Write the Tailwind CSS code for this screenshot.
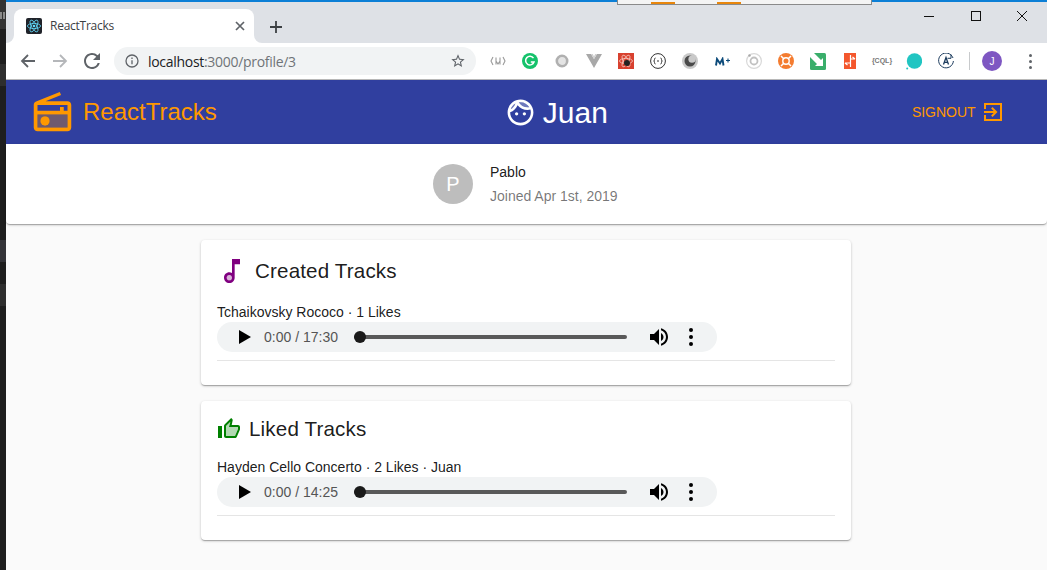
<!DOCTYPE html>
<html lang="en">
<head>
<meta charset="utf-8">
<title>ReactTracks</title>
<script src="https://cdn.jsdelivr.net/npm/@tailwindcss/browser@4"></script>
</head>
<body class="w-[1047px] h-[570px] overflow-hidden relative bg-[#fafafa] font-['Liberation_Sans',Arial,sans-serif] text-[14px] text-black/90">
  <!-- window fragment behind the browser -->
  <div class="absolute z-10 top-0 left-[617px] w-[255px] h-[5px] bg-[#f4f4f4] border-b border-x border-[#8a8a8a] flex items-end">
    <div class="ml-[33px] w-[24px] h-[2px] bg-[#e8860c]"></div>
    <div class="ml-[42px] w-[24px] h-[2px] bg-[#e8860c]"></div>
  </div>
  <div class="flex h-[570px]">
    <!-- strip of the window behind -->
    <div class="w-[6px] shrink-0 flex flex-col bg-[#1e1e1e]">
      <div class="h-[29px] bg-[#333333] flex gap-[1px] pt-[12px] text-[0px]">
        <div class="w-[2px] h-[7px] bg-[#8a8a8a]"></div>
        <div class="w-[2px] h-[7px] bg-[#8a8a8a]"></div>
      </div>
      <div class="h-[35px]"></div>
      <div class="h-[22px] bg-[#2e2e2e]"></div>
      <div class="h-[154px]"></div>
      <div class="h-[22px] bg-[#333338]"></div>
      <div class="h-[22px]"></div>
      <div class="h-[22px] bg-[#2e2e2e]"></div>
    </div>
    <div class="flex-1 min-w-0 flex flex-col">
      <div class="h-[2px] bg-[#0c7fd6]"></div>
      <!-- tab strip -->
      <div class="h-[41px] bg-[#dee1e6] flex items-end pl-[8px] relative">
        <div class="relative w-[240px] h-[34px] bg-white rounded-t-[8px] flex items-center pl-[12px] pr-[9px] pb-[0px]">
          <svg class="absolute left-[-8px] bottom-0" width="8" height="8" viewBox="0 0 8 8"><path d="M8 0v8H0a8 8 0 0 0 8-8z" fill="#fff"/></svg>
          <svg class="absolute right-[-8px] bottom-0" width="8" height="8" viewBox="0 0 8 8"><path d="M0 0v8h8a8 8 0 0 1-8-8z" fill="#fff"/></svg>
          <svg class="shrink-0" width="16" height="16" viewBox="0 0 16 16"><rect width="16" height="16" rx="2" fill="#20232a"/><g fill="none" stroke="#61dafb" stroke-width=".8"><ellipse cx="8" cy="8" rx="6.6" ry="2.6"/><ellipse cx="8" cy="8" rx="6.6" ry="2.6" transform="rotate(60 8 8)"/><ellipse cx="8" cy="8" rx="6.6" ry="2.6" transform="rotate(120 8 8)"/></g><circle cx="8" cy="8" r="1.3" fill="#61dafb"/></svg>
          <span class="ml-[8px] font-['Open_Sans',sans-serif] text-[12px] tracking-[-0.25px] text-[#3c4043]">ReactTracks</span>
          <svg class="ml-auto" width="10" height="10" viewBox="0 0 10 10" fill="none" stroke="#5f6368" stroke-width="1.7"><path d="M1 1l8 8M9 1l-8 8"/></svg>
        </div>
        <svg class="ml-[16px] mb-[10px]" width="12" height="12" viewBox="0 0 12 12" fill="none" stroke="#3c4043" stroke-width="1.8"><path d="M6 0v12M0 6h12"/></svg>
        <div class="ml-auto self-start flex items-center h-[28px] mt-0">
          <svg class="mr-[37px]" width="10" height="10" viewBox="0 0 10 10" stroke="#111" stroke-width="1"><path d="M0 5.5h10"/></svg>
          <svg class="mr-[36px]" width="10" height="10" viewBox="0 0 10 10" fill="none" stroke="#111" stroke-width="1"><rect x=".5" y=".5" width="9" height="9"/></svg>
          <svg class="mr-[20px]" width="10" height="10" viewBox="0 0 10 10" fill="none" stroke="#111" stroke-width="1"><path d="M0 0l10 10M10 0L0 10"/></svg>
        </div>
      </div>
      <!-- toolbar -->
      <div class="h-[37px] bg-white border-b border-[#b8b8b8] flex items-center pl-[6px]">
        <div class="w-[32px] flex justify-center">
          <svg width="16" height="16" viewBox="0 0 16 16" fill="none" stroke="#5f6368" stroke-width="1.8"><path d="M15 8H2M8 2L2 8l6 6"/></svg>
        </div>
        <div class="w-[32px] flex justify-center">
          <svg width="16" height="16" viewBox="0 0 16 16" fill="none" stroke="#b5b7ba" stroke-width="1.8"><path d="M1 8h13M8 2l6 6-6 6"/></svg>
        </div>
        <div class="w-[32px] flex justify-center">
          <svg width="24" height="24" viewBox="0 0 24 24"><path fill="#5f6368" d="M17.65 6.35A7.958 7.958 0 0 0 12 4c-4.42 0-7.99 3.58-7.99 8s3.57 8 7.99 8c3.73 0 6.84-2.55 7.73-6h-2.08A5.99 5.99 0 0 1 12 18c-3.31 0-6-2.69-6-6s2.69-6 6-6c1.66 0 3.14.69 4.22 1.78L13 11h7V4l-2.35 2.35z"/></svg>
        </div>
        <div class="ml-[6px] w-[362px] h-[28px] rounded-full bg-[#f1f3f4] flex items-center pl-[11px] pr-[10px]">
          <svg width="14" height="14" viewBox="0 0 14 14" fill="none" stroke="#5f6368" stroke-width="1.3"><circle cx="7" cy="7" r="6"/><path d="M7 6.2v4M7 3.6v1.3"/></svg>
          <span class="ml-[9px] font-['Open_Sans',sans-serif] text-[14px] tracking-[-0.3px] text-[#202124]">localhost<span class="text-[#6f7378]">:3000/profile/3</span></span>
          <svg class="ml-auto" width="16" height="16" viewBox="0 0 24 24"><path fill="#5f6368" d="M22 9.24l-7.19-.62L12 2 9.19 8.63 2 9.24l5.46 4.73L5.82 21 12 17.27 18.18 21l-1.63-7.03L22 9.24zM12 15.4l-3.76 2.27 1-4.28-3.32-2.88 4.38-.38L12 6.1l1.71 4.04 4.38.38-3.32 2.88 1 4.28L12 15.4z"/></svg>
        </div>
        <!-- extensions -->
        <div class="ml-[6px] flex items-center">
          <div class="w-[32px] flex justify-center"><svg width="16" height="12" viewBox="0 0 16 12" fill="none" stroke="#9a9a9a" stroke-width="1.1"><path d="M3 2L1 6l2 4M13 2l2 4-2 4M6 2.5v7M10 2.5v7M6 6l2 3 2-3"/></svg></div>
          <div class="w-[32px] flex justify-center"><svg width="16" height="16" viewBox="0 0 16 16"><circle cx="8" cy="8" r="8" fill="#15c26b"/><path d="M11.5 5.2A4.3 4.3 0 1 0 12 9H8.8" fill="none" stroke="#fff" stroke-width="1.5"/></svg></div>
          <div class="w-[32px] flex justify-center"><svg width="14" height="14" viewBox="0 0 14 14"><circle cx="7" cy="7" r="5.2" fill="#e4e4e4" stroke="#b0b0b0" stroke-width="2.6"/></svg></div>
          <div class="w-[32px] flex justify-center"><svg width="16" height="14" viewBox="0 0 16 14"><path d="M0 0h5l3 5 3-5h5L8 14z" fill="#a8a8a8"/><path d="M5 0l3 5 3-5h-1.800L8 2.500 6.800 0z" fill="#d0d0d0"/></svg></div>
          <div class="w-[32px] flex justify-center"><svg width="16" height="16" viewBox="0 0 16 16"><rect width="16" height="16" fill="#d8412f"/><g fill="none" stroke="#f5c6bd" stroke-width=".8"><ellipse cx="8" cy="8" rx="6.500" ry="2.600"/><ellipse cx="8" cy="8" rx="6.500" ry="2.600" transform="rotate(60 8 8)"/><ellipse cx="8" cy="8" rx="6.500" ry="2.600" transform="rotate(120 8 8)"/></g><circle cx="9" cy="10" r="3" fill="#222"/></svg></div>
          <div class="w-[32px] flex justify-center"><svg width="16" height="16" viewBox="0 0 16 16" fill="none" stroke="#333" stroke-width="1"><circle cx="8" cy="8" r="7.400"/><path d="M5.500 5Q4.500 5 4.500 6.500T3.700 8q.8 0 .8 1.500t1 1.500M10.500 5q1 0 1 1.500t.8 1.500q-.8 0-.8 1.500t-1 1.500M7 8h2"/></svg></div>
          <div class="w-[32px] flex justify-center"><svg width="16" height="16" viewBox="0 0 16 16"><circle cx="8" cy="8" r="8" fill="#c9c9c9"/><circle cx="8" cy="8" r="5.500" fill="#4a4a4a"/><circle cx="10" cy="6.200" r="3.600" fill="#c9c9c9"/></svg></div>
          <div class="w-[32px] flex justify-center"><svg width="15" height="9" viewBox="0 0 15 9" fill="none" stroke="#0b4a7a" stroke-width="1.900"><path d="M1 8.500L2 2l3 4.500L7.500 2l1 6.500"/><path d="M11 3.500h4M13 1.500v4" stroke-width="1.100"/></svg></div>
          <div class="w-[32px] flex justify-center"><svg width="16" height="16" viewBox="0 0 16 16" fill="none"><circle cx="8" cy="8" r="7.400" stroke="#d8d8d8" stroke-width="1.200"/><circle cx="8" cy="8" r="3.500" stroke="#c0c0c0" stroke-width="1.800"/><circle cx="3.500" cy="2.500" r="1.200" fill="#a8a8a8"/></svg></div>
          <div class="w-[32px] flex justify-center"><svg width="16" height="16" viewBox="0 0 16 16" fill="none"><circle cx="8" cy="8" r="8" fill="#f47c30"/><circle cx="8" cy="8" r="3.200" stroke="#fff" stroke-width="1.400"/><path d="M3 3l2.500 2.500M13 3l-2.500 2.500M3 13l2.500-2.500M13 13l-2.500-2.500" stroke="#fff" stroke-width="1.500"/></svg></div>
          <div class="w-[32px] flex justify-center"><svg width="16" height="17" viewBox="0 0 16 17"><rect width="16" height="17" rx="1.500" fill="#3aae6b"/><path d="M0 0l4 0 7 7 2-2v8H5l2-2L0 4z" fill="#fff"/></svg></div>
          <div class="w-[32px] flex justify-center"><svg width="12" height="16" viewBox="0 0 12 16" fill="none" stroke="#fff" stroke-width="1.200"><rect width="12" height="16" fill="#f4572d" stroke="none"/><path d="M6 6h5M8.500 4L11 6M6 10H1M3.500 12L1 10M6.500 2v12" /></svg></div>
          <div class="w-[32px] flex justify-center"><span class="font-bold text-[7px] text-[#777] whitespace-nowrap">{CQL}</span></div>
          <div class="w-[32px] flex justify-center"><svg width="16" height="17" viewBox="0 0 16 17"><circle cx="8.500" cy="8" r="7.700" fill="#21c5c2"/><circle cx="1.200" cy="15.500" r="1" fill="#21c5c2"/></svg></div>
          <div class="w-[32px] flex justify-center relative"><svg width="16" height="16" viewBox="0 0 16 16" fill="none" stroke="#1d3c5e" stroke-width="1"><path d="M15 5A7.400 7.400 0 1 0 15.400 8M13 1.500v3.800h-3.500" /><path d="M5.500 11.500L8 4.500l2.500 7M6.300 9.300h3.400" stroke-width="1.300"/></svg></div>
        </div>
        <div class="ml-[7px] w-px h-[18px] bg-[#c8cacc]"></div>
        <div class="ml-[12px] w-[20px] h-[20px] rounded-full bg-[#7e57c2] flex items-center justify-center text-white text-[10px]">J</div>
        <div class="ml-[27px] flex flex-col gap-[3px]">
          <div class="w-[3px] h-[3px] rounded-full bg-[#5f6368]"></div>
          <div class="w-[3px] h-[3px] rounded-full bg-[#5f6368]"></div>
          <div class="w-[3px] h-[3px] rounded-full bg-[#5f6368]"></div>
        </div>
      </div>
      <!-- app bar -->
      <header class="h-[64px] bg-[#303f9f] flex items-center pl-[24px] shrink-0">
        <svg class="shrink-0" width="45" height="45" viewBox="0 0 24 24" fill="#ff9800"><path opacity=".3" d="M4 20h16v-7H4v7zm4-6c1.380 0 2.500 1.120 2.500 2.500S9.380 19 8 19s-2.500-1.120-2.500-2.500S6.620 14 8 14z"/><path d="M20 6H8.300l8.260-3.340L15.880 1 3.240 6.150C2.510 6.430 2 7.170 2 8v12c0 1.100.89 2 2 2h16c1.110 0 2-.9 2-2V8c0-1.110-.89-2-2-2zm0 2v3h-2V9h-2v2H4V8h16zM4 20v-7h16v7H4z"/><circle cx="8" cy="16.500" r="2.500"/></svg>
        <span class="ml-[8px] text-[24px] text-[#ff9800]">ReactTracks</span>
        <svg class="ml-[288px] shrink-0" width="31" height="31" viewBox="0 0 24 24" fill="#fff"><path opacity=".3" d="M17.500 8c.46 0 .91-.05 1.340-.12C17.440 5.560 14.900 4 12 4c-.46 0-.91.05-1.340.12C12.060 6.440 14.600 8 17.500 8z"/><path opacity=".3" d="M8.080 5.030C6.370 6 5.050 7.580 4.420 9.470c1.710-.97 3.030-2.550 3.660-4.440z"/><path d="M10.250 13c0 .69-.56 1.250-1.250 1.250S7.750 13.690 7.750 13s.56-1.250 1.250-1.250 1.250.56 1.250 1.250zM15 11.750c-.69 0-1.250.56-1.250 1.250s.56 1.250 1.250 1.250 1.250-.56 1.250-1.250-.56-1.250-1.250-1.250zm7 .25c0 5.520-4.480 10-10 10S2 17.520 2 12 6.480 2 12 2s10 4.480 10 10zM10.660 4.120C12.060 6.440 14.600 8 17.500 8c.46 0 .91-.05 1.340-.12C17.440 5.560 14.900 4 12 4c-.46 0-.91.05-1.340.12zM4.420 9.470c1.710-.97 3.030-2.550 3.660-4.440C6.370 6 5.050 7.580 4.420 9.470zM20 12c0-.78-.12-1.530-.33-2.240-.7.15-1.420.24-2.170.24-3.130 0-5.920-1.440-7.760-3.690C8.690 8.870 6.600 10.880 4 11.860c.01.04 0 .09 0 .14 0 4.410 3.590 8 8 8s8-3.590 8-8z"/></svg>
        <span class="ml-[7px] text-[30px] text-white">Juan</span>
        <span class="ml-[304px] text-[#ff9800]">SIGNOUT</span>
        <svg class="ml-[5px] shrink-0" width="24" height="24" viewBox="0 0 24 24" fill="#ff9800"><path d="M10.090 15.590L11.500 17l5-5-5-5-1.410 1.410L12.670 11H3v2h9.670l-2.580 2.590zM21 3H3v6h2V5h14v14H5v-4H3v6h18V3z"/></svg>
      </header>
      <!-- profile paper -->
      <section class="h-[80px] bg-white rounded-b-[4px] shadow-[0_1px_3px_0_rgba(0,0,0,0.2),0_1px_1px_0_rgba(0,0,0,0.14),0_2px_1px_-1px_rgba(0,0,0,0.12)] flex items-center pl-[427px] shrink-0">
        <div class="w-[40px] h-[40px] rounded-full bg-[#bdbdbd] flex items-center justify-center text-white text-[20px]">P</div>
        <div class="ml-[17px] flex flex-col gap-[4px]">
          <div class="h-[20px] leading-[20px]">Pablo</div>
          <div class="h-[20px] leading-[20px] text-black/55">Joined Apr 1st, 2019</div>
        </div>
      </section>
      <!-- track cards -->
      <main class="flex flex-col items-center gap-[16px] pt-[16px] pr-[1px]">
        <article class="w-[650px] h-[145px] bg-white rounded-[4px] shadow-[0_1px_3px_0_rgba(0,0,0,0.2),0_1px_1px_0_rgba(0,0,0,0.14),0_2px_1px_-1px_rgba(0,0,0,0.12)] pt-[15px] px-[16px]">
          <div class="flex items-center h-[32px]">
            <svg class="ml-[-1px] shrink-0" width="32" height="32" viewBox="0 0 24 24" fill="#800080"><circle opacity=".3" cx="10.010" cy="17" r="2"/><path d="M12 3l.01 10.550c-.59-.34-1.270-.55-2-.55C7.790 13 6 14.790 6 17s1.790 4 4.010 4S14 19.210 14 17V7h4V3h-6zm-1.990 16c-1.100 0-2-.9-2-2s.9-2 2-2 2 .9 2 2-.9 2-2 2z"/></svg>
            <h2 class="ml-[7px] text-[20.6px] tracking-[0.15px]">Created Tracks</h2>
          </div>
          <div class="mt-[15px] h-[20px] leading-[20px]">Tchaikovsky Rococo · 1 Likes</div>
          <div class="w-[500px] h-[30px] rounded-full bg-[#f1f3f4] flex items-center pl-[22px]">
            <svg width="12" height="14" viewBox="0 0 12 14"><path d="M0 0l12 7-12 7z" fill="#000"/></svg>
            <span class="ml-[13px] w-[90px] text-[#555]">0:00 / 17:30</span>
            <div class="relative w-[273px] h-[4px] rounded-full bg-[#595959]"><div class="absolute left-0 top-[-4px] w-[12px] h-[12px] rounded-full bg-[#1a1a1a]"></div></div>
            <svg class="ml-[20px]" width="24" height="24" viewBox="0 0 24 24"><path d="M3 9v6h4l5 5V4L7 9H3zm13.500 3c0-1.770-1.020-3.290-2.500-4.030v8.050c1.480-.73 2.500-2.250 2.500-4.020zM14 3.230v2.060c2.890.86 5 3.540 5 6.710s-2.110 5.850-5 6.710v2.060c4.010-.91 7-4.490 7-8.770s-2.990-7.860-7-8.770z" fill="#000"/></svg>
            <div class="ml-[18px] flex flex-col gap-[3px]">
              <div class="w-[4px] h-[4px] rounded-full bg-black"></div>
              <div class="w-[4px] h-[4px] rounded-full bg-black"></div>
              <div class="w-[4px] h-[4px] rounded-full bg-black"></div>
            </div>
          </div>
          <div class="mt-[8px] h-px bg-black/10"></div>
        </article>
        <article class="w-[650px] h-[139px] bg-white rounded-[4px] shadow-[0_1px_3px_0_rgba(0,0,0,0.2),0_1px_1px_0_rgba(0,0,0,0.14),0_2px_1px_-1px_rgba(0,0,0,0.12)] pt-[16px] px-[16px]">
          <div class="flex items-center h-[24px]">
            <svg class="shrink-0" width="24" height="24" viewBox="0 0 24 24" fill="#008000"><path opacity=".3" d="M21 12v-2h-9l1.340-5.340L9 9v10h9z"/><path d="M9 21h9c.83 0 1.540-.5 1.840-1.220l3.020-7.050c.09-.23.14-.47.14-.73v-2c0-1.100-.9-2-2-2h-6.310l.95-4.570.03-.32c0-.41-.17-.79-.44-1.060L14.170 1 7.580 7.590C7.220 7.950 7 8.450 7 9v10c0 1.100.9 2 2 2zM9 9l4.340-4.340L12 10h9v2l-3 7H9V9zM1 9h4v12H1z"/></svg>
            <h2 class="ml-[8px] text-[20.6px] tracking-[0.15px]">Liked Tracks</h2>
          </div>
          <div class="mt-[16px] h-[20px] leading-[20px]">Hayden Cello Concerto · 2 Likes · Juan</div>
          <div class="w-[500px] h-[30px] rounded-full bg-[#f1f3f4] flex items-center pl-[22px]">
            <svg width="12" height="14" viewBox="0 0 12 14"><path d="M0 0l12 7-12 7z" fill="#000"/></svg>
            <span class="ml-[13px] w-[90px] text-[#555]">0:00 / 14:25</span>
            <div class="relative w-[273px] h-[4px] rounded-full bg-[#595959]"><div class="absolute left-0 top-[-4px] w-[12px] h-[12px] rounded-full bg-[#1a1a1a]"></div></div>
            <svg class="ml-[20px]" width="24" height="24" viewBox="0 0 24 24"><path d="M3 9v6h4l5 5V4L7 9H3zm13.500 3c0-1.770-1.020-3.290-2.500-4.030v8.050c1.480-.73 2.500-2.250 2.500-4.020zM14 3.230v2.060c2.890.86 5 3.540 5 6.710s-2.110 5.850-5 6.710v2.060c4.010-.91 7-4.490 7-8.770s-2.990-7.860-7-8.770z" fill="#000"/></svg>
            <div class="ml-[18px] flex flex-col gap-[3px]">
              <div class="w-[4px] h-[4px] rounded-full bg-black"></div>
              <div class="w-[4px] h-[4px] rounded-full bg-black"></div>
              <div class="w-[4px] h-[4px] rounded-full bg-black"></div>
            </div>
          </div>
          <div class="mt-[8px] h-px bg-black/10"></div>
        </article>
      </main>
    </div>
  </div>
</body>
</html>
